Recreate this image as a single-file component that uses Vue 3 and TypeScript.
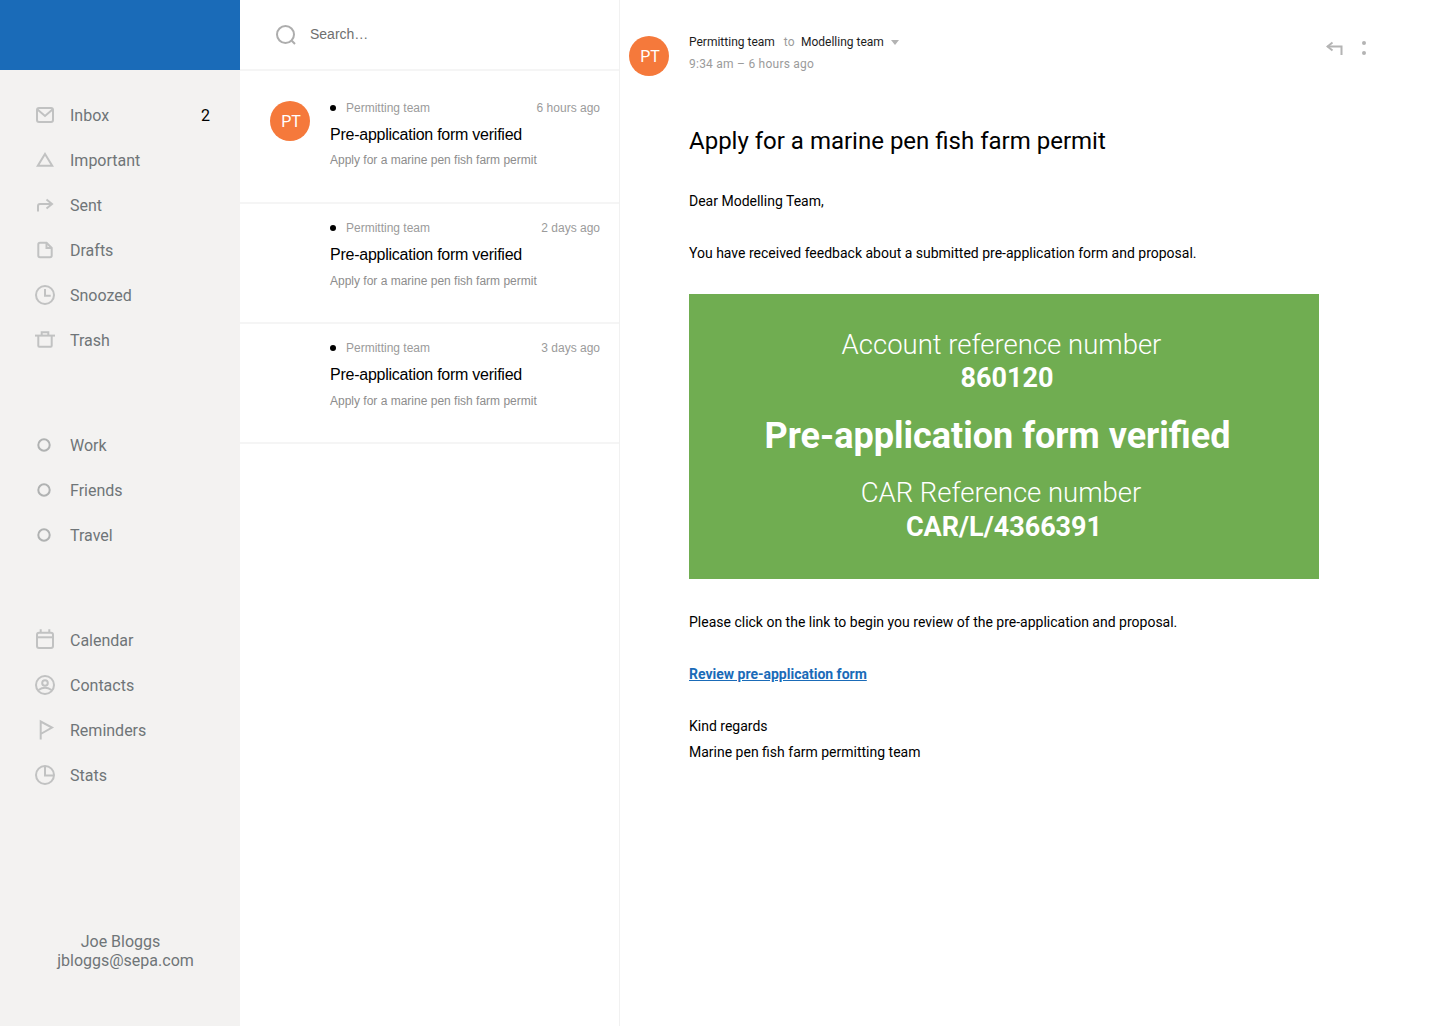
<template>
  <div class="app">
    <aside class="sidebar">
      <div class="brand"></div>
      <nav class="nav">
        <ul v-for="(group, i) in navGroups" :key="i" class="nav-group">
          <li v-for="item in group" :key="item.label" class="nav-item">
            <svg class="nav-icon" :class="{ 'nav-icon--dim': i === 1 }" viewBox="0 0 20 20" fill="none" v-html="item.icon"></svg>
            <span class="nav-label">{{ item.label }}</span>
            <span v-if="item.count" class="nav-count">{{ item.count }}</span>
          </li>
        </ul>
      </nav>
      <div class="account">
        <div class="account-name">Joe Bloggs</div>
        <div>jbloggs@sepa.com</div>
      </div>
    </aside>

    <section class="list">
      <div class="search">
        <svg class="search-icon" viewBox="0 0 20 20" fill="none">
          <circle cx="9.5" cy="9.5" r="8.5" />
          <path d="M15.8 15.8 L19 19" />
        </svg>
        <span class="search-text">Search…</span>
      </div>
      <article v-for="(msg, i) in messages" :key="msg.time" class="message" :class="{ 'message--first': i === 0 }">
        <div class="message-avatar">
          <div v-if="i === 0" class="avatar">PT</div>
        </div>
        <div class="message-body">
          <div class="message-meta">
            <span class="dot"></span>
            <span class="message-from">Permitting team</span>
            <span class="message-time">{{ msg.time }}</span>
          </div>
          <div class="message-title">Pre-application form verified</div>
          <div class="message-sub">Apply for a marine pen fish farm permit</div>
        </div>
      </article>
    </section>

    <main class="detail">
      <header class="detail-head">
        <div class="avatar">PT</div>
        <div class="detail-info">
          <div class="detail-people">
            <span>Permitting team</span>
            <span class="to">to</span>
            <span>Modelling team</span>
            <span class="caret"></span>
          </div>
          <div class="detail-time">9:34 am – 6 hours ago</div>
        </div>
        <div class="detail-actions">
          <svg class="reply" viewBox="0 0 18 14" fill="none">
            <path d="M6.5 1.5 L1.5 5.5 L6.5 9.5" />
            <path d="M1.5 5.5 H15.5 V14" />
          </svg>
          <div class="more"><i></i><i></i></div>
        </div>
      </header>

      <div class="mail">
        <h1 class="mail-title">Apply for a marine pen fish farm permit</h1>
        <p class="mail-line mail-dear">Dear Modelling Team,</p>
        <p class="mail-line mail-intro">You have received feedback about a submitted pre-application form and proposal.</p>

        <div class="banner">
          <div class="banner-line banner-a">Account reference number</div>
          <div class="banner-line banner-b"><strong>860120</strong></div>
          <div class="banner-heading">Pre-application form verified</div>
          <div class="banner-line banner-c">CAR Reference number</div>
          <div class="banner-line banner-d"><strong>CAR/L/4366391</strong></div>
        </div>

        <p class="mail-line mail-click">Please click on the link to begin you review of the pre-application and proposal.</p>
        <p class="mail-line mail-link"><a href="#">Review pre-application form</a></p>
        <p class="mail-line mail-regards">Kind regards</p>
        <p class="mail-line">Marine pen fish farm permitting team</p>
      </div>
    </main>
  </div>
</template>

<script setup lang="ts">
interface NavItem {
  label: string
  icon: string
  count?: number
}

const navGroups: NavItem[][] = [
  [
    {
      label: 'Inbox',
      count: 2,
      icon: '<rect x="2" y="3" width="16" height="14" rx="2"/><path d="M2.5 4.5 L10 11 L17.5 4.5"/>'
    },
    { label: 'Important', icon: '<path d="M10 4 L17.2 15.8 H2.8 Z"/>' },
    { label: 'Sent', icon: '<path d="M3 16.5 V11 Q3 9 5 9 H17"/><path d="M11.5 4.5 L17 9 L11.5 13.5"/>' },
    {
      label: 'Drafts',
      icon: '<path d="M3.3 4.5 Q3.3 2.7 5 2.7 H11.5 L16.7 8 V15.5 Q16.7 17.3 15 17.3 H5 Q3.3 17.3 3.3 15.5 Z"/><path d="M11.5 2.7 V8 H16.7"/>'
    },
    { label: 'Snoozed', icon: '<circle cx="10" cy="10" r="9"/><path d="M10 4 V10.7 H15.7"/>' },
    {
      label: 'Trash',
      icon: '<path d="M0 5.6 H20"/><path d="M3.3 5.6 V15.7 Q3.3 16.7 4.3 16.7 H15.7 Q16.7 16.7 16.7 15.7 V5.6"/><path d="M6.7 5.6 V2.2 H13.3 V5.6"/>'
    }
  ],
  [
    { label: 'Work', icon: '<circle cx="9" cy="10" r="5.7"/>' },
    { label: 'Friends', icon: '<circle cx="9" cy="10" r="5.7"/>' },
    { label: 'Travel', icon: '<circle cx="9" cy="10" r="5.7"/>' }
  ],
  [
    {
      label: 'Calendar',
      icon: '<rect x="2" y="2.8" width="16" height="15.2" rx="2"/><path d="M2 7.3 H18"/><path d="M5.7 -0.7 V3 M14.3 -0.7 V3"/>'
    },
    {
      label: 'Contacts',
      icon: '<circle cx="10" cy="10" r="9"/><circle cx="10" cy="8" r="2.8"/><path d="M3.5 15 Q10 10.5 16.5 15"/>'
    },
    { label: 'Reminders', icon: '<path d="M5.7 19.5 V1.5 L17 7.5 L5.7 14"/>' },
    { label: 'Stats', icon: '<circle cx="10" cy="10" r="9"/><path d="M10 1 V10.5 H19"/>' }
  ]
]

const messages = [{ time: '6 hours ago' }, { time: '2 days ago' }, { time: '3 days ago' }]
</script>

<style>
html,
body {
  margin: 0;
  background: #fff;
}
</style>

<style scoped>
.app {
  display: flex;
  height: 1026px;
  overflow: hidden;
  font-family: Roboto, sans-serif;
  color: #000;
  background: #fff;
}

/* Sidebar */
.sidebar {
  width: 240px;
  flex: none;
  display: flex;
  flex-direction: column;
  background: #f3f2f1;
}

.brand {
  height: 70px;
  flex: none;
  background: #1a6bb8;
}

.nav {
  padding-top: 23px;
}

.nav-group {
  list-style: none;
  margin: 0 0 60px;
  padding: 0;
}

.nav-item {
  display: flex;
  align-items: center;
  height: 45px;
  padding: 0 30px 0 35px;
}

.nav-icon {
  width: 20px;
  height: 20px;
  flex: none;
  margin: -1px 15px 0 0;
  stroke: #c1c2c2;
  stroke-width: 2;
  overflow: visible;
}

.nav-icon--dim {
  stroke: #b0b2b2;
}

.nav-label {
  flex: 1;
  font-size: 16px;
  color: #6f7578;
}

.nav-count {
  font-size: 16px;
}

.account {
  margin-top: auto;
  padding-bottom: 56px;
  padding-left: 11px;
  text-align: center;
  font-size: 16px;
  line-height: 19px;
  color: #6f7578;
}

.account-name {
  padding-right: 10px;
}

/* Message list */
.list {
  width: 379px;
  flex: none;
  border-right: 1px solid #f1f1f1;
  font-family: 'Liberation Sans', Arial, sans-serif;
}

.search {
  display: flex;
  align-items: center;
  height: 69px;
  padding-left: 36px;
  border-bottom: 2px solid #f5f5f5;
}

.search-icon {
  width: 20px;
  height: 20px;
  margin-right: 14px;
  stroke: #adadad;
  stroke-width: 2;
  overflow: visible;
}

.search-text {
  margin-bottom: 2px;
  font-size: 14px;
  color: #6f6f6f;
}

.message {
  display: flex;
  height: 118px;
  padding: 0 19px 0 30px;
  border-bottom: 2px solid #f5f5f5;
}

.message--first {
  height: 131px;
}

.message-avatar {
  width: 60px;
  flex: none;
  padding-top: 30px;
}

.message-body {
  flex: 1;
  padding-top: 16px;
}

.message--first .message-body {
  padding-top: 29px;
}

.message-meta {
  display: flex;
  align-items: center;
  height: 16px;
  font-size: 12px;
  color: #9b9b9b;
}

.dot {
  width: 6px;
  height: 6px;
  margin-right: 10px;
  border-radius: 50%;
  background: #000;
}

.message-from {
  flex: 1;
}

.message-title {
  margin-top: 9px;
  font-size: 16px;
  line-height: 20px;
  letter-spacing: -0.25px;
}

.message-sub {
  margin-top: 8px;
  font-size: 12px;
  line-height: 16px;
  color: #8d8d8d;
}

.message--first .message-sub {
  margin-top: 7px;
}

.avatar {
  width: 40px;
  height: 40px;
  flex: none;
  box-sizing: border-box;
  padding-left: 2px;
  display: flex;
  align-items: center;
  justify-content: center;
  border-radius: 50%;
  background: #f5793b;
  color: #fff;
  font-family: Roboto, sans-serif;
  font-size: 16px;
}

/* Reading pane */
.detail {
  flex: 1;
  min-width: 0;
}

.detail-head {
  display: flex;
  align-items: flex-start;
  padding: 36px 74px 0 9px;
}

.detail-info {
  flex: 1;
  margin-left: 20px;
}

.detail-people {
  display: flex;
  align-items: center;
  height: 14px;
  font-size: 12px;
  color: #1d1d1d;
  margin-top: -1px;
}

.to {
  margin: 0 6.5px 0 9px;
  color: #9b9b9b;
}

.caret {
  width: 0;
  height: 0;
  margin-left: 7px;
  border-style: solid;
  border-width: 5px 4.5px 0 4.5px;
  border-color: #b3b3b3 transparent transparent transparent;
}

.detail-time {
  margin-top: 8px;
  font-size: 12px;
  line-height: 14px;
  letter-spacing: 0.24px;
  color: #9b9b9b;
}

.detail-actions {
  display: flex;
  align-items: center;
  padding-top: 5px;
}

.reply {
  width: 18px;
  height: 14px;
  stroke: #b4b4b4;
  stroke-width: 2;
}

.more {
  display: flex;
  flex-direction: column;
  gap: 6px;
  margin-left: 18px;
}

.more i {
  display: block;
  width: 4px;
  height: 4px;
  border-radius: 50%;
  background: #b4b4b4;
}

.mail {
  width: 630px;
  margin-left: 69px;
}

.mail-title {
  margin: 50px 0 0;
  font-size: 24px;
  line-height: 30px;
  font-weight: 400;
}

.mail-line {
  margin: 0;
  font-size: 14px;
  line-height: 26px;
}

.mail-dear {
  margin-top: 32px;
}

.mail-intro {
  margin-top: 26px;
}

.banner {
  height: 285px;
  box-sizing: border-box;
  margin-top: 28px;
  padding-top: 34px;
  background: #70ad51;
  color: #fff;
  text-align: center;
}

.banner-line {
  font-size: 27.5px;
  line-height: 33px;
  font-weight: 300;
}

.banner-line strong {
  font-size: 27px;
  font-weight: 700;
}

.banner-a {
  padding-right: 5px;
}

.banner-b {
  padding-left: 6px;
}

.banner-c {
  padding-right: 6px;
}

.banner-d {
  margin-top: 1px;
}

.banner-heading {
  margin-top: 16px;
  padding-right: 13px;
  font-size: 36px;
  line-height: 50px;
  font-weight: 700;
}

.banner-heading + .banner-line {
  margin-top: 15px;
}

.mail-click {
  margin-top: 30px;
}

.mail-link {
  margin-top: 26px;
}

.mail-link a {
  color: #1a6bb8;
  font-weight: 700;
}

.mail-regards {
  margin-top: 26px;
}
</style>
